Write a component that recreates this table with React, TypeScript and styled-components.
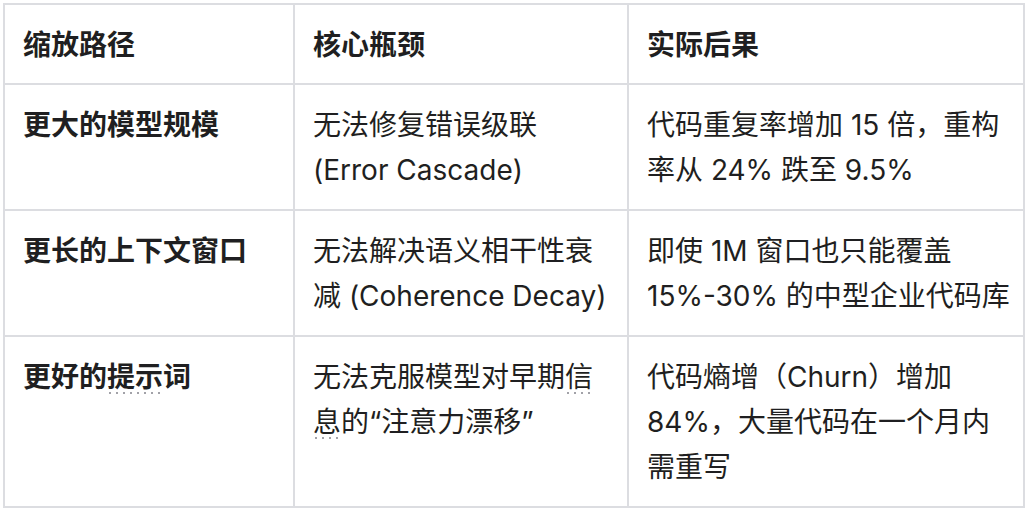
import styled, { createGlobalStyle } from 'styled-components';

const GlobalStyle = createGlobalStyle`
  html, body {
    margin: 0;
    padding: 0;
    background: #ffffff;
  }
  body {
    font-family: 'Inter', 'Noto Sans CJK SC', sans-serif;
    color: #1f1f21;
  }
`;

const Page = styled.div`
  padding: 3px;
`;

const Table = styled.table`
  width: 1020px;
  table-layout: fixed;
  border-collapse: collapse;
  font-size: 28px;
  line-height: 45px;
`;

const HeadCell = styled.th`
  border: 2px solid #dcdde1;
  padding: 18px 10px 15px 18px;
  text-align: left;
  font-weight: 600;
  white-space: nowrap;
  vertical-align: top;
`;

const Cell = styled.td<{ $strong?: boolean }>`
  border: 2px solid #dcdde1;
  padding: 18px 10px 16px 18px;
  font-weight: ${(p) => (p.$strong ? 600 : 400)};
  white-space: nowrap;
  vertical-align: top;
`;

// glossary term: sparse dotted line under the word
const Term = styled.span`
  position: relative;

  &::after {
    content: '';
    position: absolute;
    left: 2px;
    right: 2px;
    bottom: 0;
    height: 2px;
    background: repeating-linear-gradient(
      to right,
      #a2a2a8 0 2px,
      transparent 2px 7px
    );
  }
`;

type Row = {
  path: React.ReactNode;
  cause: React.ReactNode;
  result: React.ReactNode;
};

const rows: Row[] = [
  {
    path: '更大的模型规模',
    cause: (
      <>
        无法修复错误级联
        <br />
        (Error Cascade)
      </>
    ),
    result: (
      <>
        代码重复率增加 15 倍，重构
        <br />
        率从 24% 跌至 9.5%
      </>
    ),
  },
  {
    path: '更长的上下文窗口',
    cause: (
      <>
        无法解决语义相干性衰
        <br />
        减 (Coherence Decay)
      </>
    ),
    result: (
      <>
        即使 1M 窗口也只能覆盖
        <br />
        15%-30% 的中型企业代码库
      </>
    ),
  },
  {
    path: (
      <>
        更好的<Term>提示</Term>词
      </>
    ),
    cause: (
      <>
        无法克服模型对早期<Term>信</Term>
        <br />
        <Term>息</Term>的“注意力漂移”
      </>
    ),
    result: (
      <>
        代码熵增（Churn）增加
        <br />
        84%，大量代码在一个月内
        <br />
        需重写
      </>
    ),
  },
];

const App = () => {
  return (
    <Page>
      <GlobalStyle />
      <Table>
        <colgroup>
          <col style={{ width: 290 }} />
          <col style={{ width: 334 }} />
          <col style={{ width: 396 }} />
        </colgroup>
        <thead>
          <tr>
            <HeadCell>缩放路径</HeadCell>
            <HeadCell>核心瓶颈</HeadCell>
            <HeadCell>实际后果</HeadCell>
          </tr>
        </thead>
        <tbody>
          {rows.map((r, i) => (
            <tr key={i}>
              <Cell $strong>{r.path}</Cell>
              <Cell>{r.cause}</Cell>
              <Cell>{r.result}</Cell>
            </tr>
          ))}
        </tbody>
      </Table>
    </Page>
  );
};

export default App;
